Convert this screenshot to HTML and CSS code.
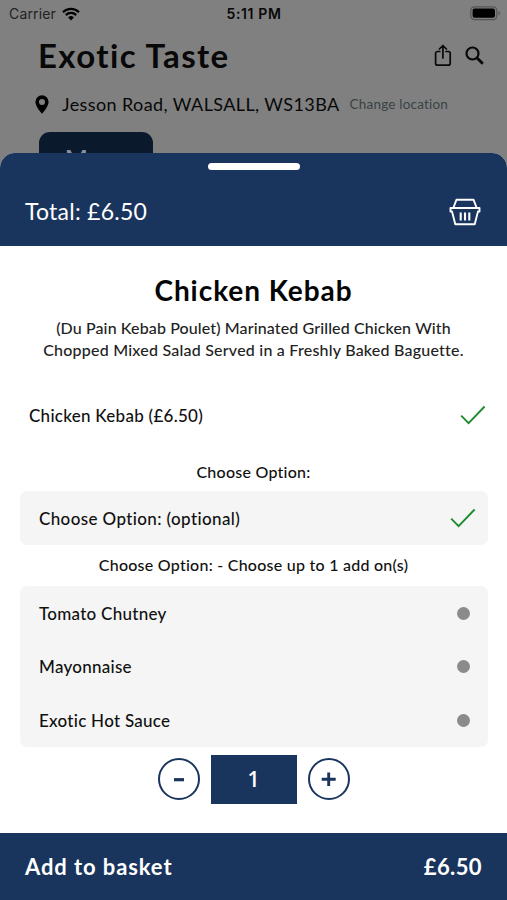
FILE: index.html
```html
<!DOCTYPE html>
<html lang="en">
<head>
<meta charset="utf-8">
<title>Exotic Taste</title>
<link rel="stylesheet" href="styles.css">
</head>
<body>
<div class="screen">
  <header class="backdrop">
    <div class="status">
      <div class="status-left"><span class="carrier">Carrier</span>
        <svg class="wifi" viewBox="0 0 18 14" width="18" height="14"><path d="M1 5.2a11.4 11.4 0 0 1 16 0M3.8 8.1a7.4 7.4 0 0 1 10.4 0" fill="none" stroke="#000" stroke-width="2.2"/><path d="M9 13.4 6.1 10.4a4.1 4.1 0 0 1 5.8 0Z"/></svg>
      </div>
      <span class="clock">5:11 PM</span>
      <div class="status-right"><svg width="31" height="15" viewBox="0 0 31 15"><rect x=".8" y=".8" width="26" height="12.8" rx="3.6" fill="none" stroke="#555" stroke-width="1.2"/><rect x="2.6" y="2.6" width="22.4" height="9.2" rx="2"/><path d="M28.5 5v4.4c1.8-.6 1.8-3.8 0-4.4Z" fill="#555"/></svg></div>
    </div>
    <div class="title-row">
      <h1><span class="t-shop">Exotic Taste</span></h1>
      <svg class="share" width="18" height="23" viewBox="0 0 18 23" fill="none" stroke="#080808" stroke-width="1.7" stroke-linecap="round" stroke-linejoin="round"><path d="M5.8 7.5H3.6a2 2 0 0 0-2 2v9.700a2 2 0 0 0 2 2h10.600a2 2 0 0 0 2-2V9.500a2 2 0 0 0-2-2H12M8.900 14V1.600M5.400 5l3.500-3.500L12.400 5"/></svg>
      <svg class="search" width="19" height="19" viewBox="0 0 19 19" fill="none" stroke="#080808"><circle cx="7.500" cy="7.500" r="6" stroke-width="2.200"/><path d="m11.800 11.800 6 6" stroke-width="2.800"/></svg>
    </div>
    <div class="location">
      <svg class="pin" width="14" height="19" viewBox="0 0 14 19"><path fill-rule="evenodd" d="M7 .3a6.600 6.600 0 0 0-6.600 6.600C.4 11.500 7 18.700 7 18.700s6.600-7.200 6.600-11.800A6.600 6.600 0 0 0 7 .3Zm0 3.600a3 3 0 1 1 0 6 3 3 0 0 1 0-6Z"/></svg>
      <span class="address">Jesson Road, WALSALL, WS13BA</span>
      <span class="change">Change location</span>
    </div>
    <div class="tab">Menu</div>
  </header>
  <main class="sheet">
    <div class="sheet-head">
      <div class="grabber"></div>
      <div class="total-row">
        <span class="total">Total: £6.50</span>
        <svg width="32" height="28" viewBox="0 0 32 28" fill="none" stroke="#fff" stroke-width="1.900" stroke-linejoin="round"><path d="M4.500 9.500 7.500 1.700h17l3 7.800M1.500 10h29v3.500H29L25.700 26.300H6.300L3 13.500H1.500Z"/><path d="M11.700 14.500v8M16 14.500v8M20.300 14.500v8" stroke-width="2.100"/></svg>
      </div>
    </div>
    <section class="content">
      <h2><span class="t-dish">Chicken Kebab</span></h2>
      <p class="description"><span class="d1">(Du Pain Kebab Poulet) Marinated Grilled Chicken With</span><br><span class="d2">Chopped Mixed Salad Served in a Freshly Baked Baguette.</span></p>
      <div class="item"><span class="i-main">Chicken Kebab (£6.50)</span>
        <svg class="check" width="26" height="20" viewBox="0 0 26 20"><path d="m1.200 10.600 7.400 7.600L24.600 1.500" fill="none" stroke="#218c2f" stroke-width="1.900"/></svg></div>
      <h3 class="first-label"><span class="t-choose">Choose Option:</span></h3>
      <div class="card"><div class="row"><span class="i-optional">Choose Option: (optional)</span>
        <svg class="check" width="26" height="20" viewBox="0 0 26 20"><path d="m1.200 10.600 7.400 7.600L24.600 1.500" fill="none" stroke="#218c2f" stroke-width="1.900"/></svg></div></div>
      <h3 class="second-label"><span class="t-addon">Choose Option: - Choose up to 1 add on(s)</span></h3>
      <div class="card">
        <div class="row"><span class="i-tomato">Tomato Chutney</span><i class="dot"></i></div>
        <div class="row"><span class="i-mayo">Mayonnaise</span><i class="dot"></i></div>
        <div class="row"><span class="i-hot">Exotic Hot Sauce</span><i class="dot"></i></div>
      </div>
      <div class="stepper">
        <button aria-label="Decrease"><svg width="16" height="16"><path d="M3 8.700h10" stroke="#19345d" stroke-width="3.200"/></svg></button>
        <div class="count">1</div>
        <button aria-label="Increase"><svg width="16" height="16"><path d="M.7 8.300h14M7.700 1.500v13.600" stroke="#19345d" stroke-width="2.900"/></svg></button>
      </div>
    </section>
    <footer><span class="add">Add to basket</span><span class="price">£6.50</span></footer>
  </main>
</div>
</body>
</html>
```
FILE: styles.css
```css
* { box-sizing: border-box; }
body { margin: 0; background: #808080; font-family: Lato, "Open Sans", sans-serif; color: #111; font-variant-ligatures: none; }
h1, h2, h3, p { margin: 0; font-weight: 500; }
svg { display: block; flex: none; }
span { white-space: nowrap; }
.screen { width: 507px; height: 900px; display: flex; flex-direction: column; overflow: hidden; }

.backdrop { height: 153px; flex: none; overflow: hidden; color: #080808; }
.status { height: 27px; padding: 0 6px 0 9px; display: grid; grid-template-columns: 1fr auto 1fr; align-items: center; font: 14px/27px Inter, sans-serif; }
.status-left { display: flex; align-items: center; gap: 6px; color: #222; letter-spacing: .15px; }
.clock { font-weight: 600; letter-spacing: .6px; margin-left: -2px; }
.status-right { display: flex; justify-content: flex-end; }
.title-row { height: 57px; padding: 0 23px 0 38px; display: flex; align-items: center; }
h1 { flex: 1; font-size: 33px; font-weight: 700; line-height: 57px; letter-spacing: 1.4px; }
.share { margin-right: 13px; }
.location { height: 40px; padding-left: 35px; display: flex; align-items: center; }
.address { margin-left: 13px; font-size: 18px; letter-spacing: .4px; }
.change { margin-left: 10px; font-size: 13.5px; letter-spacing: .2px; color: #394346; }
.tab { width: 114px; height: 50px; margin: 8px 0 0 39px; border-radius: 11px; background: #0b192c; color: #8b929b; font-size: 24px; font-weight: 700; line-height: 54px; text-align: center; }

.sheet { flex: 1; display: flex; flex-direction: column; background: #fff; border-radius: 15px 15px 0 0; overflow: hidden; }
.sheet-head { height: 93px; flex: none; padding-top: 10px; background: #19345d; color: #fff; }
.grabber { width: 92px; height: 7px; margin: 0 auto; border-radius: 3.5px; background: #fff; }
.total-row { height: 84px; padding: 0 26px 0 25px; display: flex; align-items: center; justify-content: space-between; }
.total { margin-top: -2px; font-size: 23px; letter-spacing: .25px; }
.content { flex: 1; padding: 0 20px; }
h2 { margin-top: 24px; font-size: 28px; font-weight: 700; line-height: 40px; letter-spacing: .95px; text-align: center; color: #050505; }
.description { margin-top: 7px; font-size: 16px; line-height: 22px; text-align: center; color: #222; }
.d1 { letter-spacing: .12px; }
.d2 { letter-spacing: .22px; }
.item { height: 50px; margin-top: 29px; padding: 0 1px 0 9px; display: flex; align-items: center; justify-content: space-between; font-size: 17px; font-weight: 500; letter-spacing: .27px; }
h3 { font-size: 16px; text-align: center; line-height: 24px; letter-spacing: .25px; }
.first-label { margin: 20px 0 7px; }
.second-label { margin: 8px 0 9px; }
.card { width: 468px; border-radius: 7px; background: #f5f5f5; }
.row { height: 53.8px; padding: 1px 12px 0 19px; display: flex; align-items: center; justify-content: space-between; font-size: 17px; font-weight: 500; letter-spacing: .27px; }
.i-optional { letter-spacing: .38px; }
.dot { width: 13px; height: 13px; margin-right: 6px; border-radius: 50%; background: #8b8b8b; }
.stepper { margin-top: 7.5px; display: flex; align-items: center; justify-content: center; gap: 11px; }
button { width: 42px; height: 42px; padding: 0; display: flex; align-items: center; justify-content: center; border: 2px solid #19345d; border-radius: 50%; background: #fff; }
.count { width: 86px; height: 49px; background: #19345d; color: #fff; font-family: "Open Sans", sans-serif; font-size: 21px; font-weight: 600; line-height: 48px; text-align: center; }
footer { height: 67px; flex: none; padding: 0 25px 1px; display: flex; align-items: center; justify-content: space-between; background: #19345d; color: #fff; font-size: 22px; font-weight: 700; }
.add { letter-spacing: .9px; }
.price { letter-spacing: .4px; }
```
